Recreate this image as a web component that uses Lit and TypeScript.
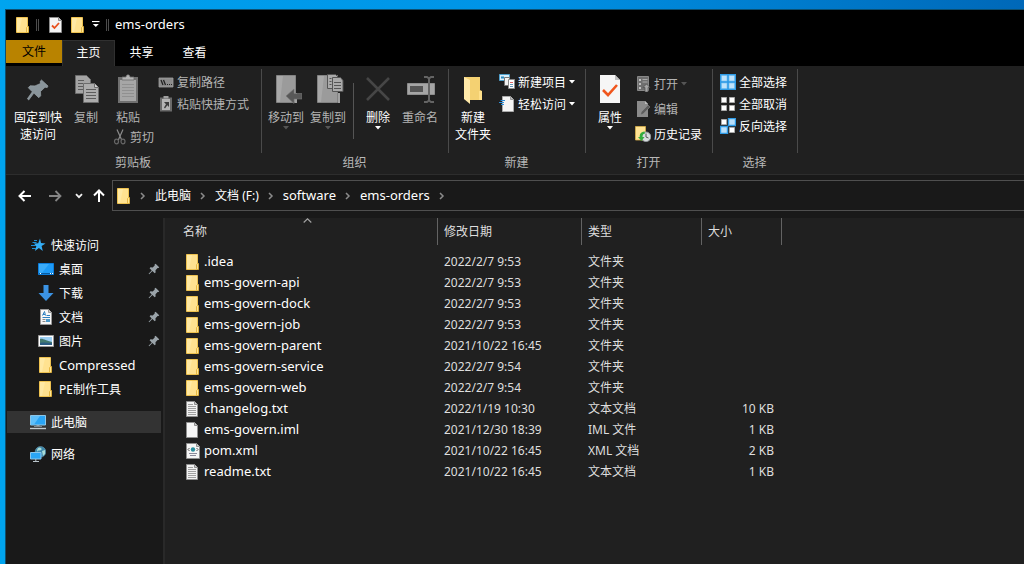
import { LitElement, html, svg, css, nothing, TemplateResult } from "lit";
import { customElement, property } from "lit/decorators.js";
import { classMap } from "lit/directives/class-map.js";

const shapes: Record<string, { w: number; h: number; art: TemplateResult }> = {
  folder: {
    w: 14, h: 16,
    art: svg`<path d="M.5.5h11v15H.5z" fill="#ffe290" stroke="#eec250"/><path d="M1 1h5L3 15H1z" fill="#ffe9a4"/><path d="M10.500 15.500V10.500l1-1h1v6z" fill="#ffe694" stroke="#e3b23a" stroke-width=".9"/>`,
  },
  checkSmall: {
    w: 13, h: 16,
    art: svg`<path d="M.5.5h9l3 3v12H.5z" fill="#f4f4f4" stroke="#8c8c8c"/><path d="M9.500.5v3h3" fill="#c8c8c8" stroke="#8c8c8c"/><path d="M3 8.500 5.500 11 10 6" fill="none" stroke="#e8501e" stroke-width="1.800"/>`,
  },
  menuCaret: {
    w: 8, h: 7,
    art: svg`<path d="M0 .5h7.500" stroke="#fff" stroke-width="1.200"/><path d="M.8 3h6L3.800 6z" fill="#fff"/>`,
  },
  bars: {
    w: 4, h: 12,
    art: svg`<path d="M.5 0v12M2.500 0v12" stroke="#4c4c4c"/>`,
  },
  pinBig: {
    w: 32, h: 32,
    art: svg`<path d="m19.500 6 6.500 6-.8 1.600-2.200-.4-4.500 4.300.2 4.300-1.900 1.900-4.900-4.600-5.200 6.900-1.300-1.200 4.900-7-4-4.100 1.800-1.900 4.900.1L18.500 9.500l-.3-2.200z" fill="#8a959b" stroke="#9aa4a9" stroke-width=".7"/>`,
  },
  copyBig: {
    w: 32, h: 32,
    art: svg`<g stroke="#6c6c6c" fill="#a4a4a4"><path d="M5.500 1.500h11l4 4v14h-15z"/><path d="M13.500 9.500h11l4 4v15h-15z" fill="#acacac"/><path d="M24.500 9.500v4h4" fill="#d0d0d0"/></g><path d="M8 6.500h6M8 9.500h5M8 12.500h5M8 15.500h5M16 15.500h10M16 18.500h10M16 21.500h10M16 24.500h10" stroke="#5c5c5c"/>`,
  },
  pasteBig: {
    w: 32, h: 32,
    art: svg`<path d="M6 3h20v26H6z" fill="#707070"/><path d="M8 6h16v21H8z" fill="#a6a6a6"/><path d="M10 10.500h12M10 13.500h12M10 16.500h12M10 19.500h12M10 22.500h12" stroke="#909090"/><path d="M10 3h4c0-3 4-3 4 0h4v3H10z" fill="#b4b4b4" stroke="#696969" stroke-width=".8"/>`,
  },
  path: {
    w: 16, h: 16,
    art: svg`<path d="M1 4h14v9H1z" fill="#8c8c8c" stroke="#a0a0a0" stroke-width=".8"/><path d="m3 6 2 5M5.500 6l2 5" stroke="#222" stroke-width="1.300"/><path d="M9 10.500h1M11 10.500h1M13 10.500h1" stroke="#222"/>`,
  },
  shortcut: {
    w: 16, h: 16,
    art: svg`<path d="M2 1.500h12v14H2z" fill="#6a6a6a"/><path d="M4 3h8v11H4z" fill="#b4b4b4"/><path d="M5.500 0h5v2.500h-5z" fill="#a0a0a0"/><path d="M6 6h5v5L9.300 9.300 7 12.500l-1-1 2-3.300z" fill="#3b3b3b"/>`,
  },
  cut: {
    w: 14, h: 16,
    art: svg`<path d="m4 .5 4.700 10.500M10 .5 5.300 11" stroke="#8b8b8b" stroke-width="1.200"/><ellipse cx="3.500" cy="12.500" rx="2" ry="2.300" fill="none" stroke="#666" stroke-width="1.200"/><ellipse cx="10" cy="12.500" rx="2" ry="2.300" fill="none" stroke="#666" stroke-width="1.200"/>`,
  },
  moveTo: {
    w: 32, h: 32,
    art: svg`<path d="M6.500 1.500h19v27h-19z" fill="#9b9b9b" stroke="#838383"/><path d="M7 2h6L10 28H7z" fill="#a8a8a8"/><path d="M25 19h2v10h-2z" fill="#a2a2a2"/><path d="m16 22 8-7v4.500h8V25h-8v4.500z" fill="#585858" stroke="#777" stroke-width=".6"/>`,
  },
  copyTo: {
    w: 32, h: 32,
    art: svg`<path d="M5.500 1.500h20v27h-20z" fill="#9b9b9b" stroke="#838383"/><path d="M6 2h6L9 28H6z" fill="#a8a8a8"/><path d="M26 19h2v10h-2z" fill="#a2a2a2"/><g fill="#aaa" stroke="#555"><path d="M15.500.5h8l3 3v11h-11z"/><path d="M20.500 3.500h8l2.500 3v11H20.500z"/></g><path d="M17.500 4.500h2M17.500 7.500h2M17.500 10.500h2M22 8.500h7M22 11.500h7M22 14.500h7" stroke="#555"/>`,
  },
  del: {
    w: 32, h: 32,
    art: svg`<path d="m5 4 22 22M27 4 5 26" stroke="#464646" stroke-width="2.600"/>`,
  },
  rename: {
    w: 32, h: 32,
    art: svg`<path d="M3.500 9.500h27v11h-27z" fill="#a5a5a5" stroke="#8d8d8d"/><path d="M6 12h13v6H6z" fill="#555"/><path d="M20 3h3l2 1.500L27 3h3M25 4.500v22M20 28h3l2-1.500 2 1.500h3" fill="none" stroke="#646464" stroke-width="2"/>`,
  },
  folderBig: {
    w: 32, h: 32,
    art: svg`<path d="M7 3h16v13l2 1v9H11l-4-1z" fill="#f4d172"/><path d="M7 3l6 3v24l-6-5z" fill="#ffe9a9"/><path d="M22 17h3v9h-3z" fill="#ffe08a"/>`,
  },
  newItem: {
    w: 16, h: 16,
    art: svg`<path d="M.5.5h10v6H.5z" fill="#d7eefb" stroke="#4f9fca"/><path d="M2 2.500h3v2H2z" fill="#2689bf"/><path d="M5.500 3.500h5v8h-5z" fill="#f3f3f3" stroke="#777"/><path d="M9.500 5.500h6v9h-6z" fill="#fff" stroke="#8b8b8b"/><path d="M11 8.500h3" stroke="#d66"/><path d="M11 10.500h3M11 12.500h3" stroke="#69b"/>`,
  },
  easy: {
    w: 16, h: 16,
    art: svg`<path d="M3.500.5h8l3 3v12h-11z" fill="#f5f5f5" stroke="#aaa"/><path d="M11.500.5v3h3" fill="#bbb" stroke="#999"/><path d="M1.500 4.500H6M0 6.500h5M2 8.500h3" stroke="#2f8fd8"/>`,
  },
  props: {
    w: 32, h: 32,
    art: svg`<path d="M6 1h15l5 5v23H6z" fill="#f6f6f6"/><path d="M21 1v5h5z" fill="#bfbfbf"/><path d="m9 16 5 5 9-10" fill="none" stroke="#f0561d" stroke-width="2.600"/>`,
  },
  open: {
    w: 16, h: 16,
    art: svg`<path d="M2.500.5h11v14h-11z" fill="#6f6f6f" stroke="#888"/><path d="M4 3h2v2H4zM4 7h2v2H4zM4 11h2v2H4z" fill="#c0c0c0"/><path d="M7.500 3.500h5M7.500 6h5" stroke="#aaa"/><path d="M11.500 8 15 11.500h-2V16h-3v-4.500H8z" fill="#a6a6a6" stroke="#444" stroke-width=".6"/>`,
  },
  edit: {
    w: 16, h: 16,
    art: svg`<path d="M2 0h8l3 3v13H2z" fill="#8b8b8b"/><path d="M10 0v3h3z" fill="#bbb"/><path d="m5.500 14 .7-3L13 4l2 2-6.800 7z" fill="#5d5d5d" stroke="#999" stroke-width=".5"/>`,
  },
  history: {
    w: 16, h: 16,
    art: svg`<path d="M.5.5h10v13.500H.5z" fill="#ffe394" stroke="#d8b04a" stroke-width=".8"/><circle cx="11" cy="10.800" r="4.800" fill="#d9dde0" stroke="#8f9598"/><path d="M11 7.500v3.500l2.500 1" fill="none" stroke="#555"/><path d="M9.500 5.500C5.500 6 4.500 8.500 4.800 11H3l3.500 4 3-4H7.500c0-2 .5-3.200 2.500-3.500z" fill="#35ad3f"/>`,
  },
  selAll: {
    w: 16, h: 16,
    art: svg`<path d="M0 0h16v16H0z" fill="#2f9be6"/><path d="M1.500 1.500h5.500v5.500H1.500zM9 1.500h5.500v5.500H9zM1.500 9h5.500v5.500H1.500zM9 9h5.500v5.500H9z" fill="#bfe2fa" stroke="#6fbdf0" stroke-width=".6"/>`,
  },
  selNone: {
    w: 16, h: 16,
    art: svg`<path d="M1.500 1.500h5v5h-5zM9.500 1.500h5v5h-5zM1.500 9.500h5v5h-5zM9.500 9.500h5v5h-5z" fill="#fff" stroke="#aaa"/>`,
  },
  selInv: {
    w: 16, h: 16,
    art: svg`<path d="M1.500 1.500h5v5h-5zM9.500 9.500h5v5h-5z" fill="#fff" stroke="#aaa"/><path d="M8.500.5h7v7h-7zM.5 8.500h7v7h-7z" fill="#b9dffa" stroke="#2f9be6" stroke-width="1.400"/>`,
  },
  back: { w: 14, h: 12, art: svg`<path d="M13 6H2M6.500 1 1.500 6l5 5" fill="none" stroke="#fff" stroke-width="2"/>` },
  forward: { w: 14, h: 12, art: svg`<path d="M1 6h11M7.500 1l5 5-5 5" fill="none" stroke="#858585" stroke-width="1.800"/>` },
  down: { w: 8, h: 6, art: svg`<path d="m1 1.200 3 3 3-3" fill="none" stroke="#f0f0f0" stroke-width="1.800"/>` },
  up: { w: 12, h: 14, art: svg`<path d="M6 13V2M1 6.500l5-5 5 5" fill="none" stroke="#fff" stroke-width="2"/>` },
  crumb: { w: 6, h: 8, art: svg`<path d="m1 1 3 3-3 3" fill="none" stroke="#8b8b8b" stroke-width="1.500"/>` },
  sort: { w: 9, h: 5, art: svg`<path d="m.7 4.500 3.800-3.700 3.800 3.700" fill="none" stroke="#a5a5a5" stroke-width="1.100"/>` },
  caret: { w: 6, h: 4, art: svg`<path d="M0 0h6L3 3.500z" fill="currentColor"/>` },
  star: {
    w: 16, h: 16,
    art: svg`<path d="m10 1.500 1 4.600 4.500.4-3.900 2.500 1.200 5-3.900-3-4 3 1.400-4.700L4 6.400l4.200-.1z" fill="#35aef5"/><path d="M4 3.500h3M2.500 5.500h4M1 8.500h5M2 11.500h4" stroke="#1f8fd6"/>`,
  },
  desktop: {
    w: 16, h: 16,
    art: svg`<path d="M.5 2.500h15v11H.5z" fill="#1d9bf7" stroke="#0c7ddb"/><path d="M1 3h10L4 12H1z" fill="#3aacfa"/><path d="M1 12.500h14" stroke="#095b9e"/><path d="M2 12.500h1M12 12.500h1M14 12.500h1" stroke="#fff"/>`,
  },
  download: {
    w: 16, h: 16,
    art: svg`<path d="M5.500 0h5v8H15.500L8 16 .5 8h5z" fill="#3b93e4"/>`,
  },
  docs: {
    w: 16, h: 16,
    art: svg`<path d="M2.500.5h8l3 3v12h-11z" fill="#f7f7f7" stroke="#9a9a9a"/><path d="M10.500.5v3h3" fill="#ccc" stroke="#999"/><path d="m4.500 6.500 2-4 1 4M5 5.500h2M8.500 6.500H12M4.500 8.500h7.500" fill="none" stroke="#2b7fc0"/><path d="M4.500 10.500h3M4.500 12.500h3" stroke="#888"/><path d="M8 10h4v3H8z" fill="#4e9ac9"/>`,
  },
  pics: {
    w: 16, h: 16,
    art: svg`<path d="M.5 2.500h15v11H.5z" fill="#fff" stroke="#9c9c9c"/><path d="M2 4h12v8H2z" fill="#9ed1f5"/><path d="M2 6c3-1 6 2 12 3v3H2z" fill="#447a70"/><path d="M2 10c4-1 8 0 12 0v2H2z" fill="#2c5d83"/>`,
  },
  pc: {
    w: 16, h: 16,
    art: svg`<path d="M.5 1.500h15v9.500H.5z" fill="#2aa5f5" stroke="#8cc6e8"/><path d="M1 2h9L4 10.500H1z" fill="#5fc0fb"/><path d="M6.500 11h3v2h-3z" fill="#9aa6ad"/><path d="M0 14.500h16" stroke="#c3ccd1" stroke-width="1.400"/><path d="M4 12.500h8" stroke="#7e898f"/>`,
  },
  net: {
    w: 16, h: 16,
    art: svg`<circle cx="10.500" cy="5.800" r="5.300" fill="#3d87ab" stroke="#6ba3bb" stroke-width=".6"/><path d="M8 2c2-1.500 4 0 3.500 1.500S8 4 8 5 6 5 8 2zM12 5l3-1v4l-2 2z" fill="#a9dcd8"/><path d="M.5 6.500h10.500v6.500H.5z" fill="#2aa5f5" stroke="#8ac6ec"/><path d="M3 15.500h6M5.800 13v2" stroke="#b9c4ca"/>`,
  },
  pin: {
    w: 12, h: 12,
    art: svg`<path d="m7.600.8 3.600 3.500-.6.8-1-.1L7.500 7.200l.1 2.200-.9.9-2.300-2.200L1.200 11.300l-.6-.6 3.100-3.300-2.100-2.200.9-.9 2.200.1 2-2-.1-1z" fill="#9aa3a9"/>`,
  },
  txt: {
    w: 14, h: 16,
    art: svg`<path d="M.5.5h8l3 3v12H.5z" fill="#f2f2f2" stroke="#8f8f8f"/><path d="M8.500.5v3h3" fill="#ccc" stroke="#8f8f8f"/><path d="M2 3.500h5M2 5.500h8M2 7.500h8M2 9.500h8M2 11.500h8M2 13.500h8" stroke="#a0a0a0"/>`,
  },
  blank: {
    w: 14, h: 16,
    art: svg`<path d="M.5.5h8l3 3v12H.5z" fill="#f6f6f6" stroke="#8f8f8f"/><path d="M8.500.5v3h3" fill="#ccc" stroke="#8f8f8f"/>`,
  },
  xml: {
    w: 14, h: 16,
    art: svg`<path d="M.5.5h10l3 3v12H.5z" fill="#f6f6f6" stroke="#8f8f8f"/><path d="M10.500.5v3h3" fill="#ccc" stroke="#8f8f8f"/><path d="m3.500 5-1.500 1.500L3.500 8M10.500 5 12 6.500 10.500 8" fill="none" stroke="#555"/><circle cx="7" cy="6.500" r="2.200" fill="#2a8f9e"/><path d="M3 10.500h8M4 12.500h6" stroke="#8b8b9b"/>`,
  },
};

function icon(name: string) {
  const s = shapes[name];
  return html`<svg class="icon" width=${s.w} height=${s.h} viewBox="0 0 ${s.w} ${s.h}" aria-hidden="true">${s.art}</svg>`;
}

const shared = css`
  * { box-sizing: border-box; }
  :host {
    font-family: "Noto Sans", "Noto Sans CJK SC", sans-serif;
    font-size: 12px;
    line-height: 17px;
    color: #fff;
  }
  .icon { display: block; flex: none; }
  button {
    font: inherit;
    color: inherit;
    background: none;
    border: 0;
    padding: 0;
    margin: 0;
  }
  a { color: inherit; text-decoration: none; }
`;

@customElement("ribbon-button")
class RibbonButton extends LitElement {
  @property() icon = "";
  @property() label = "";
  @property() more = "";
  @property({ type: Boolean }) big = false;
  @property({ type: Boolean }) menu = false;
  @property({ type: Boolean }) disabled = false;

  static styles = [shared, css`
    :host { display: block; flex: none; }
    button { display: flex; align-items: center; white-space: nowrap; }
    .small { height: 22px; gap: 3px; }
    .big { flex-direction: column; width: 100%; }
    .big .icon { margin-bottom: 3px; }
    .big .caret { height: 4px; }
    .off { color: #b4b4b4; }
    .off .caret { color: #555; }
    .caret .icon { margin: 0; }
  `];

  render() {
    const cls = classMap({ big: this.big, small: !this.big, off: this.disabled });
    return html`<button class=${cls} ?disabled=${this.disabled}>
      ${icon(this.icon)}<span>${this.label}</span>
      ${this.more ? html`<span>${this.more}</span>` : nothing}
      ${this.menu ? html`<span class="caret">${icon("caret")}</span>` : nothing}
    </button>`;
  }
}

@customElement("explorer-ribbon")
class ExplorerRibbon extends LitElement {
  static styles = [shared, css`
    :host {
      display: flex;
      height: 109px;
      background: #202020;
      border-bottom: 1px solid #2d2d2d;
      padding-top: 3px;
    }
    .group { display: flex; flex-direction: column; flex: none; margin: 0; padding: 0; }
    .body { display: flex; height: 84px; border-right: 1px solid #4a4a4a; }
    .name { padding: 1px 2px 0 0; text-align: center; color: #b8b8b8; line-height: 18px; }
    .clip { width: 256px; padding-left: 5px; }
    .org { width: 187px; padding-left: 3px; }
    .new { width: 137px; padding-left: 2px; }
    .opn { width: 127px; padding-left: 3px; }
    .sel { width: 85px; padding-left: 7px; }
    .body > *, .col > [big] { padding-top: 5px; }
    .w54 { width: 54px; }
    .w42 { width: 42px; }
    .w44 { width: 44px; }
    .body > .col { display: flex; flex-direction: column; padding-top: 2px; }
    .col > [big] { padding-top: 3px; }
    .cut { padding-left: 6px; }
    .gap-s { margin-left: 4px; }
    .body > .roomy { gap: 3px; padding-top: 4px; }
    .rule { width: 1px; height: 56px; background: #555; align-self: center; margin: 0 3px 0 4px; }
  `];

  render() {
    return html`
      <section class="group"><div class="body clip">
        <ribbon-button class="w54" big icon="pinBig" label="固定到快" more="速访问"></ribbon-button>
        <ribbon-button class="w42" big disabled icon="copyBig" label="复制"></ribbon-button>
        <div class="col">
          <ribbon-button class="w42" big disabled icon="pasteBig" label="粘贴"></ribbon-button>
          <ribbon-button class="cut" disabled icon="cut" label="剪切"></ribbon-button>
        </div>
        <div class="col gap-s">
          <ribbon-button disabled icon="path" label="复制路径"></ribbon-button>
          <ribbon-button disabled icon="shortcut" label="粘贴快捷方式"></ribbon-button>
        </div></div><div class="name">剪贴板</div></section>
      <section class="group"><div class="body org">
        <ribbon-button class="w42" big disabled menu icon="moveTo" label="移动到"></ribbon-button>
        <ribbon-button class="w42" big disabled menu icon="copyTo" label="复制到"></ribbon-button>
        <div class="rule"></div>
        <ribbon-button class="w42" big menu icon="del" label="删除"></ribbon-button>
        <ribbon-button class="w42" big disabled icon="rename" label="重命名"></ribbon-button>
      </div><div class="name">组织</div></section>
      <section class="group"><div class="body new">
        <ribbon-button class="w44" big icon="folderBig" label="新建" more="文件夹"></ribbon-button>
        <div class="col gap-s">
          <ribbon-button menu icon="newItem" label="新建项目"></ribbon-button>
          <ribbon-button menu icon="easy" label="轻松访问"></ribbon-button>
        </div></div><div class="name">新建</div></section>
      <section class="group"><div class="body opn">
        <ribbon-button class="w42" big menu icon="props" label="属性"></ribbon-button>
        <div class="col roomy gap-s">
          <ribbon-button disabled menu icon="open" label="打开"></ribbon-button>
          <ribbon-button disabled icon="edit" label="编辑"></ribbon-button>
          <ribbon-button icon="history" label="历史记录"></ribbon-button>
        </div></div><div class="name">打开</div></section>
      <section class="group"><div class="body sel">
        <div class="col">
          <ribbon-button icon="selAll" label="全部选择"></ribbon-button>
          <ribbon-button icon="selNone" label="全部取消"></ribbon-button>
          <ribbon-button icon="selInv" label="反向选择"></ribbon-button>
        </div></div><div class="name">选择</div></section>
    `;
  }
}

interface Place { icon: string; name: string; kind: string; pinned?: boolean }

const places: Place[] = [
  { icon: "star", name: "快速访问", kind: "root" },
  { icon: "desktop", name: "桌面", kind: "child", pinned: true },
  { icon: "download", name: "下载", kind: "child", pinned: true },
  { icon: "docs", name: "文档", kind: "child", pinned: true },
  { icon: "pics", name: "图片", kind: "child", pinned: true },
  { icon: "folder", name: "Compressed", kind: "child latin" },
  { icon: "folder", name: "PE制作工具", kind: "child" },
  { icon: "pc", name: "此电脑", kind: "root top current" },
  { icon: "net", name: "网络", kind: "root top" },
];

const files = [
  ["folder", ".idea", "2022/2/7 9:53", "文件夹", ""],
  ["folder", "ems-govern-api", "2022/2/7 9:53", "文件夹", ""],
  ["folder", "ems-govern-dock", "2022/2/7 9:53", "文件夹", ""],
  ["folder", "ems-govern-job", "2022/2/7 9:53", "文件夹", ""],
  ["folder", "ems-govern-parent", "2021/10/22 16:45", "文件夹", ""],
  ["folder", "ems-govern-service", "2022/2/7 9:54", "文件夹", ""],
  ["folder", "ems-govern-web", "2022/2/7 9:54", "文件夹", ""],
  ["txt", "changelog.txt", "2022/1/19 10:30", "文本文档", "10 KB"],
  ["blank", "ems-govern.iml", "2021/12/30 18:39", "IML 文件", "1 KB"],
  ["xml", "pom.xml", "2021/10/22 16:45", "XML 文档", "2 KB"],
  ["txt", "readme.txt", "2021/10/22 16:45", "文本文档", "1 KB"],
];

@customElement("app-root")
class AppRoot extends LitElement {
  static styles = [shared, css`
    :host {
      display: flex;
      min-height: 100vh;
      padding: 9px 0 0 5px;
      background: linear-gradient(90deg, #00a4ef, #0093e6 50%, #0068b8);
    }
    .window {
      flex: 1;
      min-width: 0;
      display: flex;
      flex-direction: column;
      background: #191919;
      border: solid #0d4f70;
      border-width: 1px 0 0 1px;
    }
    .title {
      display: flex;
      align-items: center;
      height: 30px;
      padding: 0 0 1px 10px;
      background: #000;
    }
    .title h1 { margin: 0 0 0 5px; font-size: 13px; font-weight: 400; }
    .title .bars { margin: 0 9px 0 6px; }
    .title .caret { margin: 0 6px 0 7px; }
    .title .quick { margin-right: 9px; }
    .tabs { display: flex; height: 26px; background: #000; }
    .tab { width: 53px; height: 26px; padding-bottom: 1px; }
    .tab.file { width: 56px; height: 23px; background: #b98300; color: #000; }
    .tab.on { padding-bottom: 3px; background: #202020; border: solid #303030; border-width: 1px 1px 0; }
    .nav { display: flex; align-items: center; height: 43px; padding: 0 0 2px 12px; }
    .nav .step { margin-right: 16px; }
    .nav .forward { margin-right: 13px; }
    .nav .recent { margin-right: 10px; }
    .nav .parent { margin-right: 7px; }
    .address {
      flex: 1;
      display: flex;
      align-items: center;
      height: 31px;
      padding-left: 4px;
      border: 1px solid #4f4f4f;
      border-right: 0;
    }
    .sep { display: flex; justify-content: center; width: 24px; }
    .latin { font-size: 13px; }
    .content { flex: 1; display: flex; }
    .side {
      flex: none;
      width: 159px;
      padding: 15px 2px 0 1px;
      border-right: 2px solid #292929;
    }
    .place { display: flex; align-items: center; height: 24px; gap: 5px; padding: 0 1px 0 23px; }
    .child { padding-left: 31px; }
    .top { height: 22px; margin-top: 10px; }
    .current { background: #333; }
    .slot { display: flex; justify-content: center; width: 16px; }
    .place .text { flex: 1; }
    .main { flex: 1; min-width: 0; padding-left: 12px; background: #202020; }
    table { width: 605px; table-layout: fixed; border-collapse: separate; border-spacing: 0; color: #dedede; }
    .c1 { width: 261px; }
    .c2 { width: 144px; }
    .c3 { width: 120px; }
    .c4 { width: 80px; }
    th {
      position: relative;
      height: 27px;
      padding: 0 6px;
      border-right: 1px solid #636363;
      text-align: left;
      font-weight: 400;
    }
    .sort { position: absolute; top: 0; left: 0; right: 0; display: flex; justify-content: center; }
    td { height: 21px; padding: 0 8px 0 6px; white-space: nowrap; }
    .space td { height: 6px; }
    .size { text-align: right; }
    .name { display: flex; align-items: center; gap: 3px; padding-left: 2px; color: #fff; font-size: 13px; }
  `];

  render() {
    return html`<div class="window">
      <header class="title">
        ${icon("folder")}<span class="bars">${icon("bars")}</span>
        <button class="quick" aria-label="属性">${icon("checkSmall")}</button>
        <button aria-label="新建文件夹">${icon("folder")}</button>
        <button class="caret" aria-label="自定义快速访问工具栏">${icon("menuCaret")}</button>
        ${icon("bars")}
        <h1>ems-orders</h1>
      </header>
      <nav class="tabs">
        <button class="tab file">文件</button>
        <button class="tab on">主页</button>
        <button class="tab">共享</button>
        <button class="tab">查看</button>
      </nav>
      <explorer-ribbon></explorer-ribbon>
      <div class="nav">
        <button class="step" aria-label="后退">${icon("back")}</button>
        <button class="forward" aria-label="前进">${icon("forward")}</button>
        <button class="recent" aria-label="最近浏览的位置">${icon("down")}</button>
        <button class="parent" aria-label="上移">${icon("up")}</button>
        <div class="address">
          ${icon("folder")}<span class="sep">${icon("crumb")}</span>
          <a href="#">此电脑</a><span class="sep">${icon("crumb")}</span>
          <a href="#">文档 (F:)</a><span class="sep">${icon("crumb")}</span>
          <a href="#" class="latin">software</a><span class="sep">${icon("crumb")}</span>
          <a href="#" class="latin">ems-orders</a><span class="sep">${icon("crumb")}</span>
        </div>
      </div>
      <div class="content">
        <aside class="side">
          ${places.map((p) => html`<a href="#" class="place ${p.kind}">
            <span class="slot">${icon(p.icon)}</span><span class="text">${p.name}</span>${p.pinned ? icon("pin") : nothing}
          </a>`)}
        </aside>
        <main class="main">
          <table>
            <colgroup><col class="c1"><col class="c2"><col class="c3"><col class="c4"></colgroup>
            <thead><tr>
              <th>名称<span class="sort">${icon("sort")}</span></th><th>修改日期</th><th>类型</th><th>大小</th>
            </tr></thead>
            <tbody>
              <tr class="space"><td colspan="4"></td></tr>
              ${files.map(([i, name, date, type, size]) => html`<tr>
                <td><div class="name"><span class="slot">${icon(i)}</span>${name}</div></td>
                <td>${date}</td><td>${type}</td><td class="size">${size}</td>
              </tr>`)}
            </tbody>
          </table>
        </main>
      </div>
    </div>`;
  }
}
